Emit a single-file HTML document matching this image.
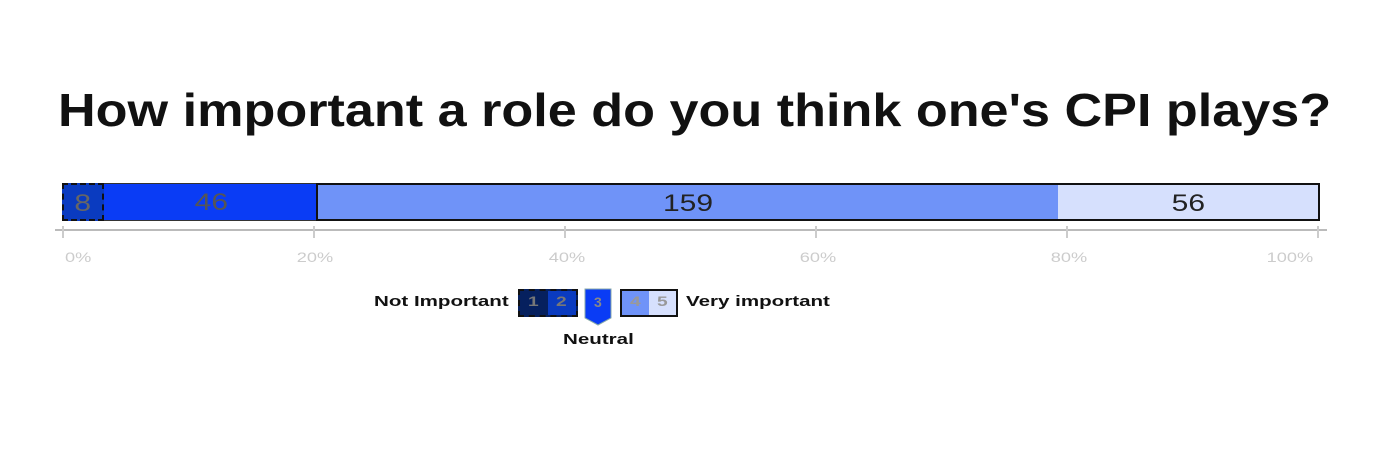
<!DOCTYPE html>
<html><head><style>
body{margin:0;width:1377px;height:474px;background:#fff;position:relative;font-family:"Liberation Sans",Arial,sans-serif;overflow:hidden}
.a{position:absolute}
.t{left:58px;top:83px;font-size:46px;font-weight:bold;color:#111;white-space:nowrap;transform:scaleX(1.134);transform-origin:left top}
.seg{position:absolute;top:183px;height:38px;box-sizing:border-box;text-align:center;line-height:38px;font-size:24px;color:#222}
.seg span{display:inline-block;transform:scaleX(1.25)}
.tick{position:absolute;top:226px;width:2px;height:12px;background:#ccc}
.lab{position:absolute;top:249px;font-size:14px;color:#ccc;width:60px;text-align:center}
.lab span{display:inline-block;transform:scaleX(1.3)}
.lg{font-size:15px;font-weight:bold;color:#111;white-space:nowrap;transform:scaleX(1.37);transform-origin:left top}
</style></head><body>
<div class="a t">How important a role do you think one's CPI plays?</div>
<div class="seg" style="left:62px;width:42px;background:#0a3bc0;border:2px dashed #111;color:#666"><span>8</span></div>
<div class="seg" style="left:104px;width:214px;background:#0a3cf5;border-top:1px solid #333;border-bottom:1px solid #333;color:#555"><span>46</span></div>
<div class="seg" style="left:316px;width:743px;background:#6f93f8;border:2px solid #111;border-right:none"><span>159</span></div>
<div class="seg" style="left:1058px;width:262px;background:#d6e0fd;border:2px solid #111;border-left:none"><span>56</span></div>
<div class="a" style="left:55px;top:229px;width:1272px;height:2px;background:#bbb"></div>
<div class="tick" style="left:62px"></div><div class="tick" style="left:313px"></div><div class="tick" style="left:564px"></div><div class="tick" style="left:815px"></div><div class="tick" style="left:1066px"></div><div class="tick" style="left:1317px"></div>
<div class="lab" style="left:48px"><span>0%</span></div><div class="lab" style="left:285px"><span>20%</span></div><div class="lab" style="left:537px"><span>40%</span></div><div class="lab" style="left:788px"><span>60%</span></div><div class="lab" style="left:1039px"><span>80%</span></div><div class="lab" style="left:1250px;width:80px"><span>100%</span></div>
<div class="a lg" style="left:374px;top:293px">Not Important</div>
<div class="a" style="left:518px;top:289px;width:60px;height:28px;background:#06205e;border:2px dashed #111;box-sizing:border-box"></div>
<div class="a" style="left:548px;top:291px;width:28px;height:24px;background:#0a3bc0"></div>
<div class="a lg" style="left:528px;top:293px;color:#777;font-size:14px">1</div>
<div class="a lg" style="left:556px;top:293px;color:#777;font-size:14px">2</div>
<svg class="a" style="left:584px;top:288px" width="28" height="38"><path d="M1 1H27V30L14 37L1 30Z" fill="#0a3cf5" stroke="#8aa" stroke-width="1"/><text x="10" y="19" font-size="14" font-weight="bold" fill="#888" font-family="Liberation Sans">3</text></svg>
<div class="a" style="left:620px;top:289px;width:58px;height:28px;background:#d6e0fd;border:2px solid #111;box-sizing:border-box"></div>
<div class="a" style="left:622px;top:291px;width:27px;height:24px;background:#6f93f8"></div>
<div class="a lg" style="left:630px;top:293px;color:#999;font-size:14px">4</div>
<div class="a lg" style="left:657px;top:293px;color:#999;font-size:14px">5</div>
<div class="a lg" style="left:686px;top:293px">Very important</div>
<div class="a lg" style="left:563px;top:331px">Neutral</div>
</body></html>
